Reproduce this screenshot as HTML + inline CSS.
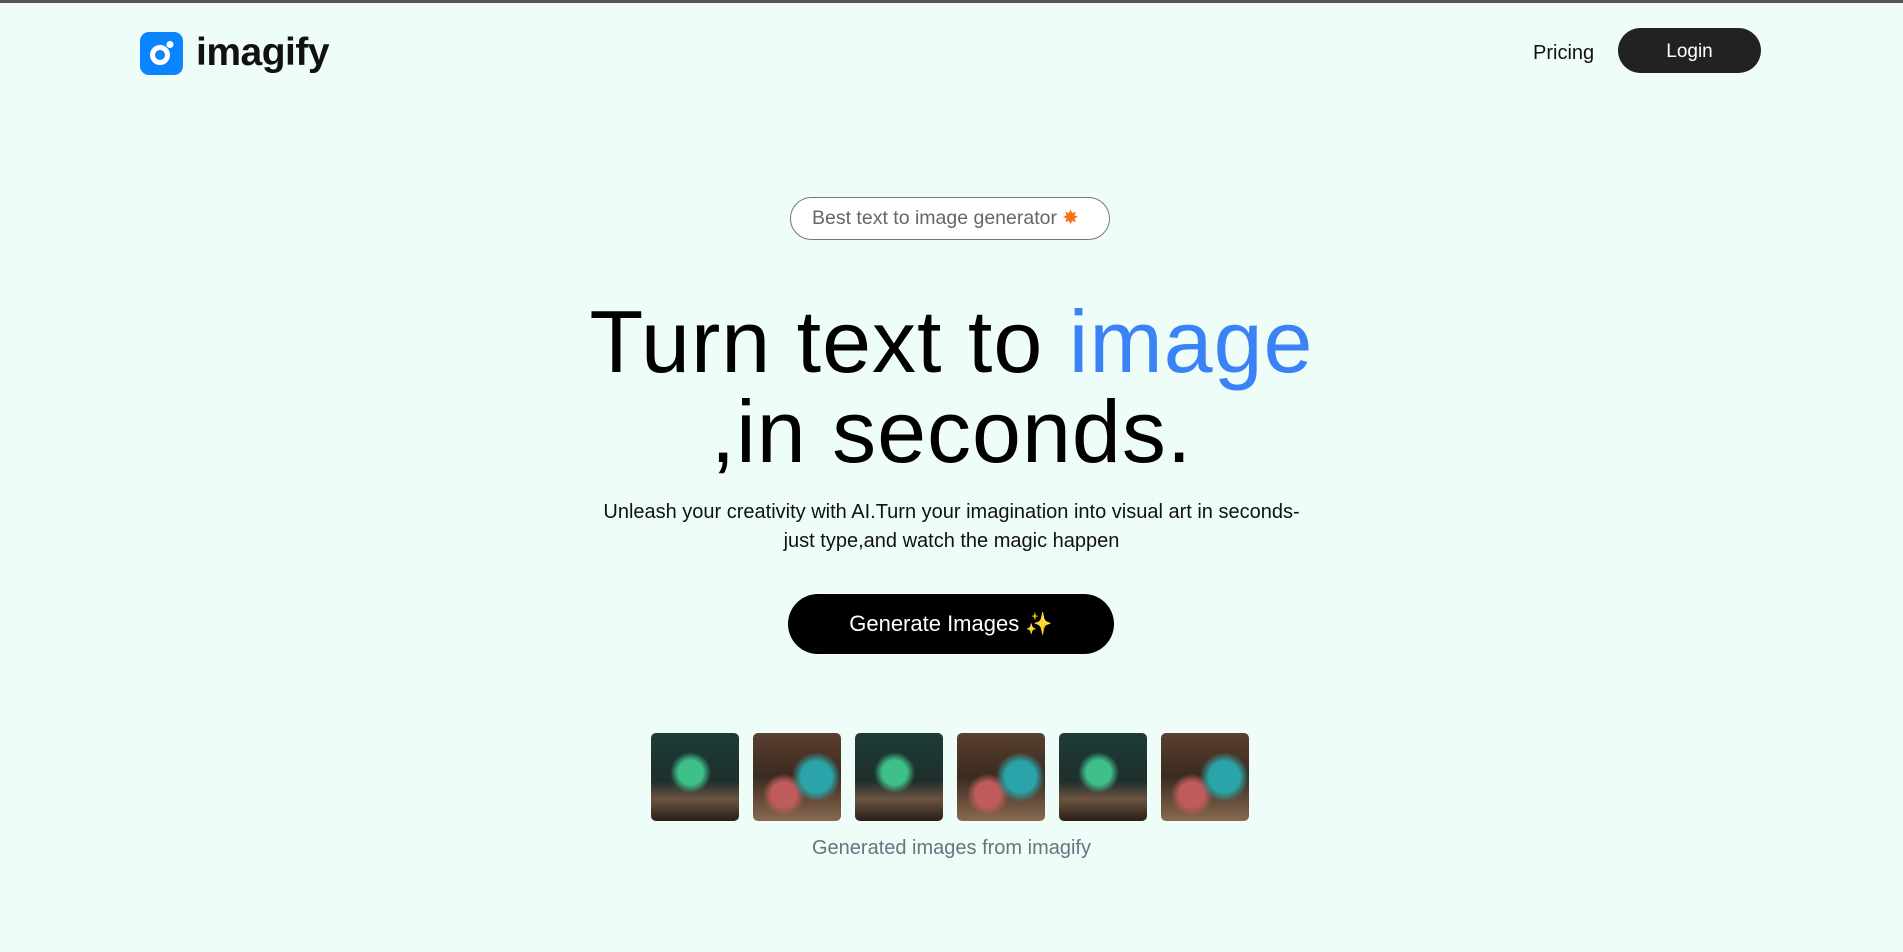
<!DOCTYPE html>
<html><head><meta charset="utf-8"><style>
*{margin:0;padding:0;box-sizing:border-box}
body{width:1903px;height:952px;background:#effdf8;font-family:"Liberation Sans",sans-serif;position:relative;overflow:hidden;border-top:3px solid #555}
.abs{position:absolute}
.logo{left:140px;top:29px;width:43px;height:43px;background:#0a84ff;border-radius:9px}
.brand{left:196px;top:28px;font-size:39px;font-weight:bold;color:#111;letter-spacing:-0.5px}
.pricing{left:1533px;top:39px;font-size:20px;color:#111}
.login{left:1618px;top:25px;width:143px;height:45px;background:#222;border-radius:23px;color:#fff;font-size:19px;text-align:center;line-height:48px}
.badge{left:790px;top:194px;width:320px;height:43px;border:1px solid #777;border-radius:22px;background:#fff;color:#666;font-size:19.5px;line-height:41px;padding-left:21px}
h1{position:absolute;left:0;width:1903px;top:294px;text-align:center;font-weight:normal;font-size:88px;line-height:90px;color:#000;letter-spacing:1px}
h1 span{color:#3b82f6}
.sub{left:0;width:1903px;top:495px;text-align:center;font-size:20px;line-height:29px;color:#111}
.btn{left:788px;top:591px;width:326px;height:60px;background:#000;border-radius:30px;color:#fff;font-size:22px;text-align:center;line-height:60px}
.imgs{left:651px;top:730px;display:flex;gap:14px}
.imgs div{width:88px;height:88px;border-radius:5px}
.a{background:radial-gradient(circle at 45% 45%,#3fbf8a 0 18%,transparent 30%),linear-gradient(180deg,#1d3b38 0,#1f2f2c 55%,#6b5440 75%,#2a1e17 100%)}
.b{background:radial-gradient(circle at 72% 50%,#2aa4a8 0 20%,transparent 32%),radial-gradient(circle at 35% 70%,#c05b5b 0 15%,transparent 25%),linear-gradient(180deg,#5a4030 0,#3a2a20 50%,#8a6a50 100%)}
.cap{left:0;width:1903px;top:834px;text-align:center;font-size:20px;color:#6b7280}
</style></head><body>
<div class="abs logo"><svg width="43" height="43" viewBox="0 0 43 43"><circle cx="20" cy="23" r="7.5" fill="none" stroke="#fff" stroke-width="5"/><circle cx="30" cy="12.5" r="3.5" fill="#fff"/></svg></div>
<div class="abs brand">imagify</div>
<div class="abs pricing">Pricing</div>
<div class="abs login">Login</div>
<div class="abs badge">Best text to image generator <span style="color:#f97316">✸</span></div>
<h1>Turn text to <span>image</span><br>,in seconds.</h1>
<div class="abs sub">Unleash your creativity with AI.Turn your imagination into visual art in seconds-<br>just type,and watch the magic happen</div>
<div class="abs btn">Generate Images <span style="color:#fcd34d">✨</span></div>
<div class="abs imgs"><div class="a"></div><div class="b"></div><div class="a"></div><div class="b"></div><div class="a"></div><div class="b"></div></div>
<div class="abs cap">Generated images from imagify</div>
</body></html>
